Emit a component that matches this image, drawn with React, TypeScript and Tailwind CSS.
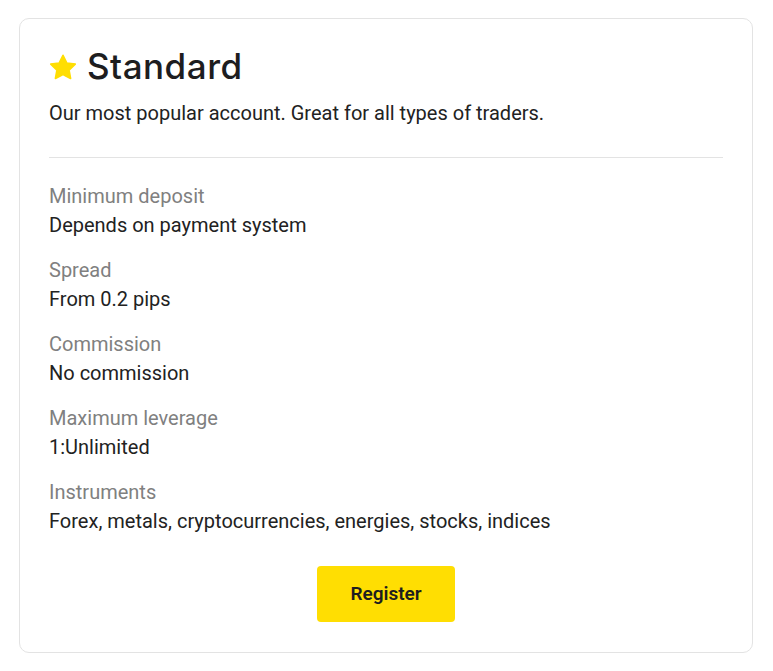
import React from "react";

const rows = [
  ["Minimum deposit", "Depends on payment system"],
  ["Spread", "From 0.2 pips"],
  ["Commission", "No commission"],
  ["Maximum leverage", "1:Unlimited"],
  ["Instruments", "Forex, metals, cryptocurrencies, energies, stocks, indices"],
];

export default function App() {
  return (
    <div className="min-h-[671px] w-[773px] bg-white pt-[18px] pl-[19px]" style={{ fontFamily: "Roboto, 'Liberation Sans', sans-serif" }}>
      <div className="w-[734px] h-[635px] rounded-[10px] border border-[#e3e3e3] px-[29px] pt-[27px] flex flex-col">
        <div className="flex items-center gap-[10px] h-[40px]">
          <svg width="28" height="27" viewBox="0 0 24 23" className="mt-[3px]">
            <path d="M12 1l3.2 6.6 7.3 1-5.3 5.1 1.3 7.2L12 17.5l-6.5 3.4 1.3-7.2L1.5 8.6l7.3-1z" fill="#ffde02" stroke="#ffde02" strokeWidth="1.4" strokeLinejoin="round" />
          </svg>
          <h1 className="text-[35px] font-medium text-[#1d1d1f] tracking-[0.5px]" style={{ fontFamily: "Inter, 'Open Sans', sans-serif" }}>Standard</h1>
        </div>
        <p className="mt-[13px] text-[20px] leading-[28px] text-[#222]">Our most popular account. Great for all types of traders.</p>
        <div className="mt-[30px] h-px bg-[#e3e3e3]" />
        <div className="mt-[24px] flex flex-col gap-[16px]">
          {rows.map(([l, v]) => (
            <div key={l} className="flex flex-col">
              <div className="text-[20px] leading-[29px] text-[#808080]">{l}</div>
              <div className="text-[20px] leading-[29px] text-[#222]">{v}</div>
            </div>
          ))}
        </div>
        <div className="mt-[30px] flex justify-center">
          <button className="w-[138px] h-[56px] rounded-[4px] bg-[#ffde02] text-[19px] font-semibold text-[#1d1d1f]">Register</button>
        </div>
      </div>
    </div>
  );
}
